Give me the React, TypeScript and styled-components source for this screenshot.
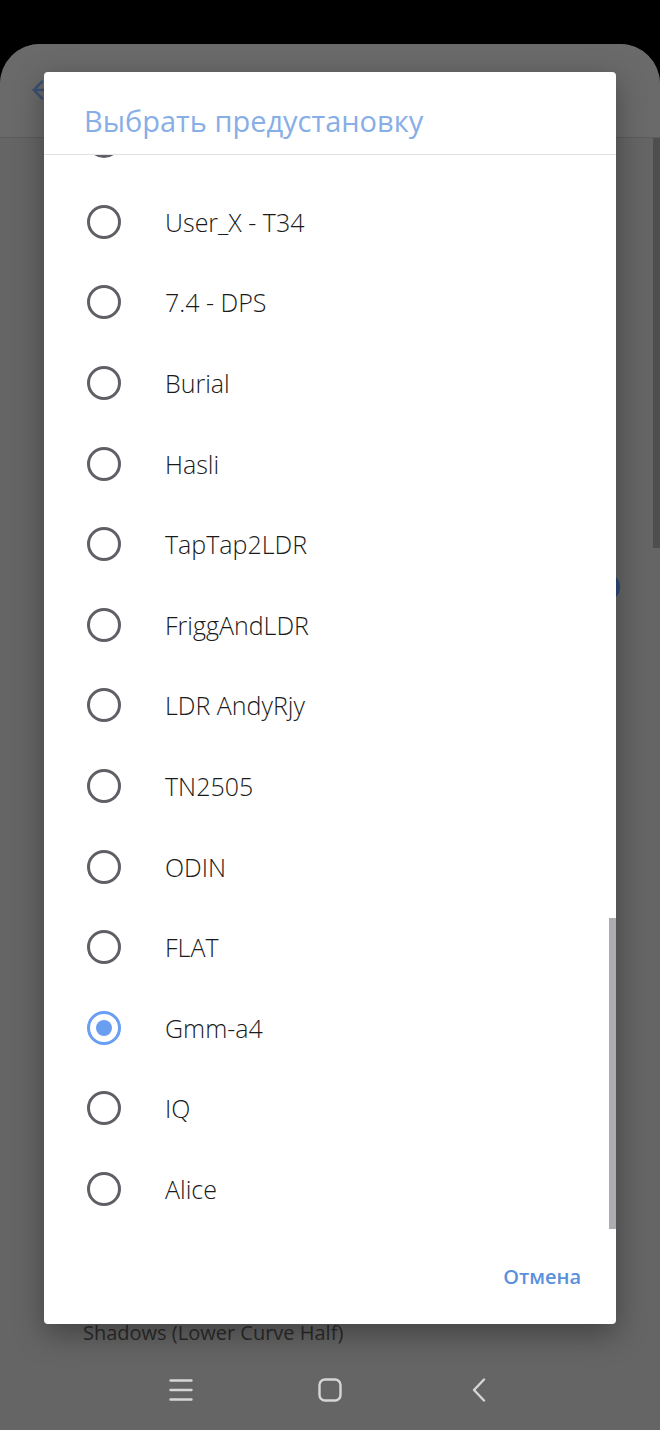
import { useLayoutEffect, useRef, useState } from 'react';
import styled, { createGlobalStyle } from 'styled-components';

const GlobalStyle = createGlobalStyle`
  html, body {
    margin: 0;
    padding: 0;
    background: #000;
  }
  body {
    font-family: "Open Sans", "Noto Sans", sans-serif;
    -webkit-font-smoothing: antialiased;
  }
`;

const presets = [
  'Tone - LDR 2.1',
  'User_X - T34',
  '7.4 - DPS',
  'Burial',
  'Hasli',
  'TapTap2LDR',
  'FriggAndLDR',
  'LDR AndyRjy',
  'TN2505',
  'ODIN',
  'FLAT',
  'Gmm-a4',
  'IQ',
  'Alice',
];

const ROW = 80.6;

export default function App() {
  const [selected, setSelected] = useState('Gmm-a4');
  const listRef = useRef<HTMLDivElement>(null);

  // the list is scrolled to its end, with the first row tucked under the title
  useLayoutEffect(() => {
    if (listRef.current) listRef.current.scrollTop = 55;
  }, []);

  return (
    <Screen>
      <GlobalStyle />
      <StatusBar />
      <Phone>
        <AppHeader>
          <BackArrow viewBox="0 0 24 24">
            <path d="M20 11H7.8l5.6-5.6L12 4l-8 8 8 8 1.4-1.4L7.8 13H20z" />
          </BackArrow>
        </AppHeader>
        <Content>
          <SettingRow>
            <Knob />
          </SettingRow>
          <PageScroll />
          <SectionLabel>Shadows (Lower Curve Half)</SectionLabel>
        </Content>
        <NavBar>
          <NavIcon viewBox="0 0 24 24">
            <path d="M1.5 2.5h21M1.5 12h21M1.5 21.5h21" />
          </NavIcon>
          <NavIcon viewBox="0 0 24 24">
            <rect x="1.5" y="1.5" width="21" height="21" rx="5.5" />
          </NavIcon>
          <NavIcon viewBox="0 0 24 24">
            <path d="M17 1.5L7 12l10 10.5" />
          </NavIcon>
        </NavBar>

        <Dialog>
          <Title>Выбрать предустановку</Title>
          <ListWrap>
            <List ref={listRef}>
              {presets.map((name) => (
                <Row key={name} onClick={() => setSelected(name)}>
                  <Radio $checked={selected === name} />
                  <RowLabel>{name}</RowLabel>
                </Row>
              ))}
            </List>
            <ScrollThumb />
          </ListWrap>
          <Actions>
            <TextButton>Отмена</TextButton>
          </Actions>
        </Dialog>
      </Phone>
    </Screen>
  );
}

const Screen = styled.div`
  width: 660px;
  height: 1430px;
  background: #000;
  display: flex;
  flex-direction: column;
  overflow: hidden;
`;

const StatusBar = styled.div`
  height: 44px;
  flex-shrink: 0;
`;

const Phone = styled.div`
  position: relative;
  flex: 1;
  display: flex;
  flex-direction: column;
  background: #656565;
  border-radius: 40px 40px 0 0;
  overflow: hidden;
`;

const AppHeader = styled.div`
  height: 94px;
  flex-shrink: 0;
  background: #6a6a6a;
  border-bottom: 1px solid #5c5c5c;
  display: flex;
  align-items: center;
  padding-left: 27px;
  padding-bottom: 2px;
  box-sizing: border-box;
`;

const BackArrow = styled.svg`
  width: 30px;
  height: 30px;
  fill: #3c4f74;
`;

const Content = styled.div`
  position: relative;
  flex: 1;
  display: flex;
  flex-direction: column;
`;

const SettingRow = styled.div`
  display: flex;
  justify-content: flex-end;
  padding: 434px 40px 0 0;
`;

const Knob = styled.div`
  width: 30px;
  height: 30px;
  border-radius: 50%;
  background: #2f4a7c;
`;

const PageScroll = styled.div`
  position: absolute;
  right: 0;
  top: 0;
  width: 7px;
  height: 410px;
  background: #4e4e4e;
`;

const SectionLabel = styled.div`
  margin-top: auto;
  padding: 0 0 20px 83px;
  font-size: 20px;
  line-height: 27px;
  color: #2b2b2b;
`;

const NavBar = styled.div`
  height: 64px;
  flex-shrink: 0;
  display: flex;
  justify-content: center;
  align-items: center;
  gap: 125px;
  padding-bottom: 16px;
  box-sizing: border-box;
`;

const NavIcon = styled.svg`
  width: 24px;
  height: 24px;
  fill: none;
  stroke: #d6d6d6;
  stroke-width: 2.4;
  stroke-linecap: round;
  stroke-linejoin: round;
`;

const Dialog = styled.div`
  position: absolute;
  left: 44px;
  top: 28px;
  width: 572px;
  height: 1252px;
  background: #fff;
  border-radius: 4px;
  box-shadow: 0 10px 30px rgba(0, 0, 0, 0.35);
  display: flex;
  flex-direction: column;
  overflow: hidden;
`;

const Title = styled.div`
  height: 83px;
  flex-shrink: 0;
  box-sizing: border-box;
  padding: 29px 0 0 40px;
  font-size: 29px;
  color: #87aee6;
  border-bottom: 1px solid #e2e2e2;
`;

const ListWrap = styled.div`
  position: relative;
  height: 1074px;
  flex-shrink: 0;
`;

const List = styled.div`
  height: 100%;
  overflow-y: auto;
  scrollbar-width: none;
  &::-webkit-scrollbar {
    display: none;
  }
`;

const ScrollThumb = styled.div`
  position: absolute;
  right: 0;
  bottom: 0;
  width: 7px;
  height: 311px;
  background: #adadb1;
`;

const Row = styled.div`
  height: ${ROW}px;
  display: flex;
  align-items: center;
  padding-left: 43px;
  cursor: pointer;
`;

const Radio = styled.div<{ $checked: boolean }>`
  width: 34px;
  height: 34px;
  flex-shrink: 0;
  box-sizing: border-box;
  border-radius: 50%;
  border: 3px solid ${(p) => (p.$checked ? '#6a9ef0' : '#5f6065')};
  display: flex;
  align-items: center;
  justify-content: center;

  &::after {
    content: '';
    display: ${(p) => (p.$checked ? 'block' : 'none')};
    width: 16px;
    height: 16px;
    border-radius: 50%;
    background: #6a9ef0;
  }
`;

const RowLabel = styled.div`
  margin-left: 44px;
  font-size: 25px;
  font-weight: 300;
  color: #1a1a1a;
`;

const Actions = styled.div`
  flex: 1;
  display: flex;
  justify-content: flex-end;
  align-items: center;
  padding-right: 35px;
`;

const TextButton = styled.div`
  font-size: 20px;
  font-weight: 600;
  color: #5a90dc;
  cursor: pointer;
`;
